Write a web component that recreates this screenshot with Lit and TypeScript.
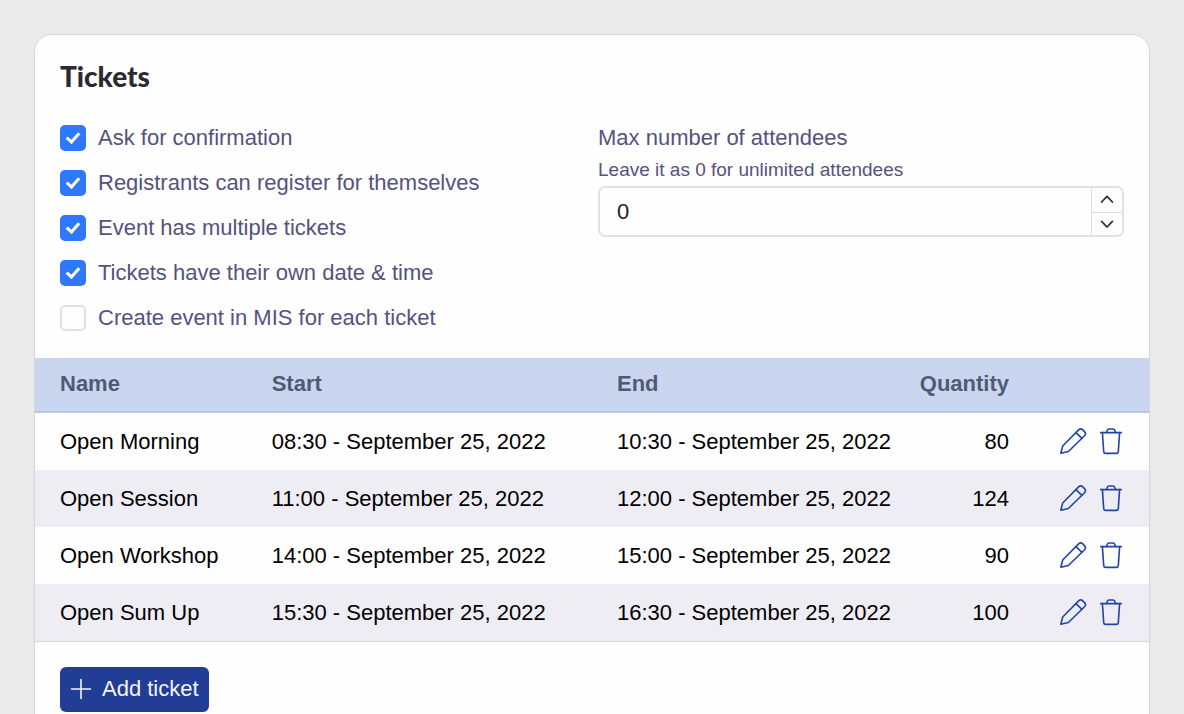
import { LitElement, html, css } from "lit";
import { customElement, state } from "lit/decorators.js";

interface Option {
  id: string;
  label: string;
  checked: boolean;
}

interface Ticket {
  name: string;
  start: string;
  end: string;
  quantity: number;
}

@customElement("app-root")
export class AppRoot extends LitElement {
  static styles = css`
    :host {
      display: block;
      box-sizing: border-box;
      height: 100vh;
      overflow: auto;
      scrollbar-width: none;
      padding: 34px;
      background: #eaeaea;
      font-family: "Liberation Sans", Arial, sans-serif;
      font-size: 22px;
      line-height: 26px;
      color: #000;
    }
    *,
    *::before {
      box-sizing: border-box;
    }
    .card {
      border: 1px solid #d3d6e0;
      border-radius: 18px;
      background: #fefefe;
    }
    .title {
      margin: 0;
      padding: 23px 25px 0;
      font-family: Lato, sans-serif;
      font-size: 28px;
      line-height: 36px;
      font-weight: 900;
      color: #2b2a33;
    }
    .settings {
      display: grid;
      grid-template-columns: 1fr 1fr;
      gap: 12px;
      padding: 31px 25px 27px;
      color: #55527e;
    }
    .options {
      display: flex;
      flex-direction: column;
      gap: 19px;
    }
    .option {
      display: flex;
      align-items: center;
      gap: 12px;
    }
    .tick {
      appearance: none;
      display: grid;
      place-items: center;
      width: 26px;
      height: 26px;
      margin: 0;
      border: 2px solid #e0e0e9;
      border-radius: 5px;
      background: #fefefe;
    }
    .tick:checked {
      border-color: #2e78fc;
      background: #2e78fc;
    }
    .tick:checked::before {
      content: "";
      width: 8px;
      height: 13px;
      margin-bottom: 3px;
      border: solid #fff;
      border-width: 0 3px 3px 0;
      transform: rotate(42deg);
    }
    .field {
      display: flex;
      flex-direction: column;
    }
    .hint {
      padding: 7px 0 4px;
      font-size: 19px;
      line-height: 24px;
    }
    .number {
      display: flex;
      height: 51px;
      border: 2px solid #e0e1ea;
      border-radius: 7px;
      overflow: hidden;
    }
    .value {
      flex: 1;
      min-width: 0;
      padding: 0 17px;
      border: 0;
      outline: 0;
      background: transparent;
      font: inherit;
      color: #222;
      appearance: textfield;
    }
    .value::-webkit-inner-spin-button {
      appearance: none;
    }
    .steps {
      display: grid;
      grid-template-rows: 1fr 1fr;
      width: 31px;
      border-left: 1px solid #dddde7;
    }
    .step {
      display: grid;
      place-items: center;
      padding: 0;
      border: 0;
      background: transparent;
      color: #32313a;
    }
    .step + .step {
      border-top: 1px solid #dddde7;
    }
    .tickets {
      width: 100%;
      border-collapse: separate;
      border-spacing: 0;
      table-layout: fixed;
    }
    .name {
      width: 19%;
    }
    .start {
      width: 31%;
    }
    .end {
      width: 27%;
    }
    th {
      height: 55px;
      padding: 0 0 2px 25px;
      border-bottom: 2px solid #b9c5e2;
      background: #cad6f0;
      color: #4f5b76;
      text-align: left;
      font-weight: 700;
    }
    td {
      height: 57px;
      padding: 0 0 0 25px;
    }
    tbody tr:nth-child(even) td {
      background: #efedf4;
    }
    th.quantity,
    td.quantity {
      padding-left: 0;
      text-align: right;
    }
    th.actions,
    td.actions {
      width: 140px;
      padding: 0 26px 0 0;
    }
    .buttons {
      display: flex;
      justify-content: flex-end;
      gap: 12px;
      padding-bottom: 2px;
    }
    .icon {
      display: block;
      padding: 0;
      border: 0;
      background: transparent;
      color: #2145a2;
      cursor: pointer;
    }
    svg {
      display: block;
      fill: none;
      stroke: currentColor;
      stroke-linecap: round;
      stroke-linejoin: round;
    }
    .footer {
      padding: 25px;
      border-top: 1px solid #d3d5e1;
    }
    .add {
      display: flex;
      align-items: center;
      gap: 10px;
      height: 45px;
      padding: 0 10px 2px;
      border: 0;
      border-radius: 6px;
      background: #213d96;
      color: #f4f3fb;
      font: inherit;
      cursor: pointer;
    }
  `;

  @state() private max = 0;

  private options: Option[] = [
    { id: "confirm", label: "Ask for confirmation", checked: true },
    { id: "self", label: "Registrants can register for themselves", checked: true },
    { id: "multiple", label: "Event has multiple tickets", checked: true },
    { id: "dates", label: "Tickets have their own date & time", checked: true },
    { id: "mis", label: "Create event in MIS for each ticket", checked: false },
  ];

  private tickets: Ticket[] = [
    { name: "Open Morning", start: "08:30 - September 25, 2022", end: "10:30 - September 25, 2022", quantity: 80 },
    { name: "Open Session", start: "11:00 - September 25, 2022", end: "12:00 - September 25, 2022", quantity: 124 },
    { name: "Open Workshop", start: "14:00 - September 25, 2022", end: "15:00 - September 25, 2022", quantity: 90 },
    { name: "Open Sum Up", start: "15:30 - September 25, 2022", end: "16:30 - September 25, 2022", quantity: 100 },
  ];

  private step(by: number) {
    this.max = Math.max(0, this.max + by);
  }

  render() {
    return html`
      <section class="card">
        <h2 class="title">Tickets</h2>
        <div class="settings">
          <div class="options">
            ${this.options.map(
              (o) => html`
                <div class="option">
                  <input class="tick" type="checkbox" id=${o.id} .checked=${o.checked} />
                  <label for=${o.id}>${o.label}</label>
                </div>
              `
            )}
          </div>
          <div class="field">
            <label for="max">Max number of attendees</label>
            <span class="hint" id="hint">Leave it as 0 for unlimited attendees</span>
            <div class="number">
              <input
                class="value"
                id="max"
                type="number"
                min="0"
                aria-describedby="hint"
                .value=${String(this.max)}
                @input=${(e: Event) => (this.max = Number((e.target as HTMLInputElement).value))}
              />
              <div class="steps">
                <button class="step" type="button" aria-label="Increase" @click=${() => this.step(1)}>
                  <svg width="14" height="10" stroke-width="1.8"><path d="M1.6 7 7 1.4 12.4 7" /></svg>
                </button>
                <button class="step" type="button" aria-label="Decrease" @click=${() => this.step(-1)}>
                  <svg width="14" height="10" stroke-width="1.8"><path d="M1.6 2.4 7 8 12.4 2.4" /></svg>
                </button>
              </div>
            </div>
          </div>
        </div>
        <table class="tickets">
          <thead>
            <tr>
              <th class="name" scope="col">Name</th>
              <th class="start" scope="col">Start</th>
              <th class="end" scope="col">End</th>
              <th class="quantity" scope="col">Quantity</th>
              <th class="actions"></th>
            </tr>
          </thead>
          <tbody>
            ${this.tickets.map(
              (t) => html`
                <tr>
                  <td>${t.name}</td>
                  <td>${t.start}</td>
                  <td>${t.end}</td>
                  <td class="quantity">${t.quantity}</td>
                  <td class="actions">
                    <div class="buttons">
                      <button class="icon" type="button" aria-label="Edit ${t.name}">
                        <svg width="28" height="28" stroke-width="1.6">
                          <path d="M1.8 26.2 3.7 19 19.6 2.9a3 3 0 0 1 4.2 0l1.7 1.7a3 3 0 0 1 0 4.2L9.4 24.5Z" />
                          <path d="M17 5.6 22.9 11.4" />
                        </svg>
                      </button>
                      <button class="icon" type="button" aria-label="Delete ${t.name}">
                        <svg width="24" height="28" stroke-width="1.6">
                          <path d="M1.7 5.6h20.6" />
                          <path d="M7.4 5.6 8.2 3.4a2 2 0 0 1 1.9-1.4h3.8a2 2 0 0 1 1.9 1.4L16.6 5.6" />
                          <path d="M3.4 5.6 4.7 24.6a2 2 0 0 0 2 1.8h10.6a2 2 0 0 0 2-1.8L20.6 5.6" />
                        </svg>
                      </button>
                    </div>
                  </td>
                </tr>
              `
            )}
          </tbody>
        </table>
        <div class="footer">
          <button class="add" type="button">
            <svg width="22" height="22" stroke-width="1.6"><path d="M11 1.5v19M1.5 11h19" /></svg>
            Add ticket
          </button>
        </div>
      </section>
    `;
  }
}
